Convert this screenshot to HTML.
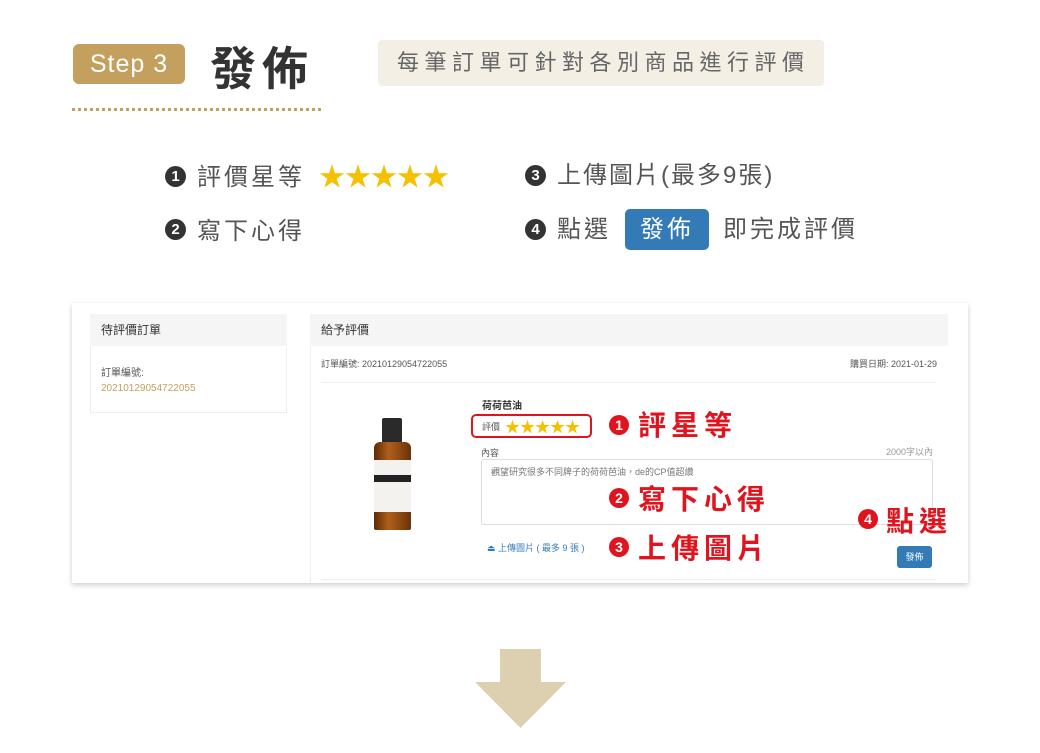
<!DOCTYPE html>
<html><head><meta charset="utf-8"><style>
*{margin:0;padding:0;box-sizing:border-box}
body{width:1040px;height:753px;background:#fff;position:relative;overflow:hidden;font-family:"Liberation Sans","Noto Sans CJK TC",sans-serif}
.a{position:absolute;white-space:nowrap}
.num{position:absolute;width:21px;height:21px;border-radius:50%;background:#333;color:#fff;font-size:15px;font-weight:bold;text-align:center;line-height:21px}
.t{font-size:24px;color:#555;letter-spacing:3px}
.star{color:#f5c000}
.rn{position:absolute;width:20px;height:20px;border-radius:50%;background:#e0141e;color:#fff;font-size:14px;font-weight:bold;text-align:center;line-height:20px}
.rt{font-size:28px;font-weight:bold;color:#e0141e;letter-spacing:5px}
.s{font-size:9px;color:#555}
</style></head><body>
<div class="a" style="left:73px;top:44px;width:112px;height:40px;background:#c4a05f;border-radius:6px;color:#fff;font-size:25px;line-height:40px;text-align:center;letter-spacing:1px">Step 3</div>
<div class="a" style="left:210px;top:33px;font-size:46px;font-weight:bold;color:#333;letter-spacing:6px">發佈</div>
<div class="a" style="left:378px;top:40px;width:446px;height:46px;background:#f3efe5;border-radius:4px;color:#666;font-size:22px;line-height:46px;padding-left:19px;letter-spacing:5.5px">每筆訂單可針對各別商品進行評價</div>
<div class="a" style="left:72px;top:108px;width:249px;border-top:3px dotted #c4a05f"></div>

<div class="num" style="left:165px;top:166px">1</div>
<div class="a t" style="left:197px;top:157px">評價星等</div>
<div class="a star" style="left:319px;top:157px;font-size:26px;letter-spacing:0">★★★★★</div>
<div class="num" style="left:165px;top:219px">2</div>
<div class="a t" style="left:197px;top:211px">寫下心得</div>
<div class="num" style="left:525px;top:165px">3</div>
<div class="a t" style="left:557px;top:155px;letter-spacing:2px">上傳圖片(最多9張)</div>
<div class="num" style="left:525px;top:219px">4</div>
<div class="a t" style="left:557px;top:209px">點選</div>
<div class="a" style="left:625px;top:209px;width:84px;height:41px;background:#337ab7;border-radius:5px;color:#fff;font-size:24px;line-height:41px;text-align:center;letter-spacing:3px">發佈</div>
<div class="a t" style="left:723px;top:209px">即完成評價</div>

<div class="a" style="left:72px;top:303px;width:896px;height:280px;background:#fff;box-shadow:0 2px 5px rgba(0,0,0,.2)"></div>
<div class="a" style="left:90px;top:314px;width:197px;height:99px;border:1px solid #eee"></div>
<div class="a" style="left:90px;top:314px;width:197px;height:32px;background:#f5f5f5;font-size:12px;color:#333;line-height:32px;padding-left:11px">待評價訂單</div>
<div class="a s" style="left:101px;top:364px;font-size:10px">訂單編號:</div>
<div class="a" style="left:101px;top:383px;font-size:10px;color:#c4a05f">20210129054722055</div>

<div class="a" style="left:310px;top:314px;width:638px;height:269px;border-left:1px solid #eee"></div>
<div class="a" style="left:310px;top:314px;width:638px;height:32px;background:#f5f5f5;font-size:12px;color:#333;line-height:32px;padding-left:11px">給予評價</div>
<div class="a s" style="left:321px;top:357px">訂單編號: 20210129054722055</div>
<div class="a s" style="left:850px;top:357px">購買日期: 2021-01-29</div>
<div class="a" style="left:321px;top:382px;width:615px;border-top:1px solid #eee"></div>
<div class="a" style="left:321px;top:579px;width:615px;border-top:1px solid #eee"></div>

<div class="a" style="left:382px;top:418px;width:20px;height:26px;background:#2a2a2a;border-radius:2px 2px 0 0"></div>
<div class="a" style="left:374px;top:442px;width:37px;height:88px;background:linear-gradient(90deg,#5a2a08,#b0601a 40%,#6a3208);border-radius:6px 6px 2px 2px"></div>
<div class="a" style="left:374px;top:460px;width:37px;height:52px;background:#f4f2ee"></div>
<div class="a" style="left:374px;top:475px;width:37px;height:7px;background:#222"></div>

<div class="a" style="left:482px;top:397px;font-size:10px;font-weight:bold;color:#333">荷荷芭油</div>
<div class="a" style="left:471px;top:414px;width:121px;height:24px;border:2px solid #e0141e;border-radius:5px"></div>
<div class="a s" style="left:482px;top:420px">評價</div>
<div class="a star" style="left:505px;top:416px;font-size:15px;letter-spacing:0">★★★★★</div>
<div class="rn" style="left:609px;top:415px">1</div>
<div class="a rt" style="left:638px;top:404px">評星等</div>
<div class="a s" style="left:481px;top:446px">內容</div>
<div class="a" style="left:886px;top:445px;font-size:9px;color:#999">2000字以內</div>
<div class="a" style="left:481px;top:459px;width:452px;height:66px;border:1px solid #ddd;border-radius:3px"></div>
<div class="a" style="left:491px;top:465px;font-size:9px;color:#777">觀望研究很多不同牌子的荷荷芭油，de的CP值超讚</div>
<div class="rn" style="left:609px;top:488px">2</div>
<div class="a rt" style="left:638px;top:478px">寫下心得</div>
<div class="rn" style="left:858px;top:509px">4</div>
<div class="a rt" style="left:886px;top:500px">點選</div>
<div class="a" style="left:487px;top:541px;font-size:9px;color:#337ab7">⏏ 上傳圖片 ( 最多 9 張 )</div>
<div class="rn" style="left:609px;top:537px">3</div>
<div class="a rt" style="left:638px;top:527px">上傳圖片</div>
<div class="a" style="left:897px;top:546px;width:35px;height:22px;background:#337ab7;border-radius:3px;color:#fff;font-size:9px;line-height:22px;text-align:center">發佈</div>

<svg class="a" style="left:475px;top:649px" width="92" height="80"><polygon points="25,0 66,0 66,33 91,33 45.5,79 0,33 25,33" fill="#ddd0b0"/></svg>
</body></html>
